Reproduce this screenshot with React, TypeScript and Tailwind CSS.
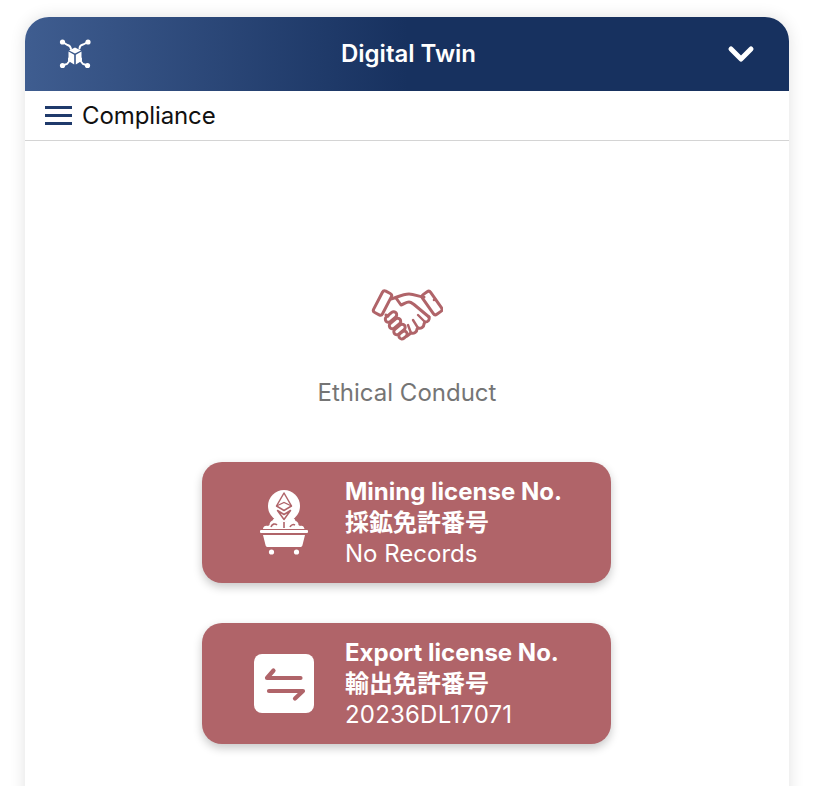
import type { ReactNode } from "react";
import { ChevronDown } from "lucide-react";

function TwinLogo() {
  return (
    <svg width="32" height="32" viewBox="0 0 32 32" fill="none" stroke="white" strokeWidth="1.9" strokeLinecap="round">
      <circle cx="3.500" cy="4" r="2.600" fill="white" stroke="none" />
      <circle cx="29" cy="4" r="2.600" fill="white" stroke="none" />
      <circle cx="3.500" cy="27.500" r="2.600" fill="white" stroke="none" />
      <circle cx="28.500" cy="27.500" r="2.600" fill="white" stroke="none" />
      <path d="M3.500 4l5 3c2 .5 3 1.500 3.500 4" />
      <path d="M29 4l-5 2.500c-2 .5-3.500 1.500-3.500 4" />
      <path d="M3.500 27.500l4.500-1.500 2-2.500v-3" />
      <path d="M28.500 27.500l-4.500-1.500-2-2.500v-3" />
      <path d="M16 9.500l6 3-6 3-6-3z" fill="white" stroke="none" />
      <path d="M9.500 13.500l5.700 3.200v9.800l-5.700-3.500zM22.500 13.500l-5.700 3.200v9.800l5.700-3.500z" fill="white" stroke="none" />
    </svg>
  );
}

function Handshake() {
  return (
    <svg width="72" height="52" viewBox="0 0 72 52" fill="none" stroke="#b06469" strokeWidth="3" strokeLinejoin="round" strokeLinecap="round">
      <rect x="-5" y="-12" width="10" height="24" rx="2.500" transform="translate(11.500 14) rotate(27.500)" />
      <rect x="-5" y="-12" width="10" height="24" rx="2.500" transform="translate(61 14) rotate(-35)" />
      <circle cx="63" cy="11" r="0.600" strokeWidth="1.400" />
      <path d="M20 10c5-1 11-5 18-5 6 0 10 3 15 3" />
      <path d="M25 9l5 7c3-1 5-3 8-3 2 0 3 1 5 2.500L58 28" />
      <path d="M58 28c1 3-1 5-4 5l-1 2c0 3-3 5-6 4l-1 1c0 3-3 5-6 4l-4 3" />
      <path d="M47 26l7 7M42 31l5 8M37 36l3 8" strokeWidth="2.400" />
      <path d="M15 26l2 1" />
      <rect x="-6.500" y="-3" width="13" height="6" rx="3" transform="translate(20 28) rotate(-40)" />
      <rect x="-6.500" y="-3" width="13" height="6" rx="3" transform="translate(24 34.500) rotate(-40)" />
      <rect x="-6.500" y="-3" width="13" height="6" rx="3" transform="translate(28.500 40.500) rotate(-40)" />
      <rect x="-4.500" y="-3" width="9" height="6" rx="3" transform="translate(32 46) rotate(-40)" />
    </svg>
  );
}

function MiningCart() {
  return (
    <svg width="48" height="67" viewBox="0 0 48 67">
      <circle cx="24" cy="17" r="16" fill="white" />
      <path d="M24 4l7.500 13-7.500 4.500-7.500-4.500z" fill="none" stroke="#b06469" strokeWidth="1.500" strokeLinejoin="round" />
      <path d="M16.500 17l7.500-3.500 7.500 3.500" fill="none" stroke="#b06469" strokeWidth="1.200" />
      <path d="M17.500 21.500l6.500 4 6.500-4-6.500 9z" fill="none" stroke="#b06469" strokeWidth="1.500" strokeLinejoin="round" />
      <path d="M3 40c0-3 3-4 5-3l1.500-1c0-2 1-4 3-4.500 1-2 2.500-3 4-3 2 3 4 4 7.500 4s6-1 7.500-4c2 0 3.500 1.500 4 3.500 2 .5 3 2 3 4l1.500 1c2-1 4 0 4.500 3z" fill="white" />
      <path d="M11 38c1-3 4-4 6-2M24 33v6M30 38c1-2 3-3 5-2" stroke="#b06469" strokeWidth="1.600" fill="none" />
      <rect x="0" y="41" width="48" height="3" rx="1" fill="white" />
      <path d="M3 46h42l-2.500 10c-.3 1.500-1 2-2.500 2H8c-1.500 0-2.200-.5-2.500-2z" fill="white" />
      <circle cx="11.500" cy="63" r="2.600" fill="white" />
      <circle cx="36.500" cy="63" r="2.600" fill="white" />
    </svg>
  );
}

function ExchangeIcon() {
  return (
    <div className="flex h-[59px] w-[60px] items-center justify-center rounded-[8px] bg-white">
      <svg width="44" height="44" viewBox="0 0 44 44" fill="none" stroke="#b06469" strokeWidth="4.200" strokeLinecap="round" strokeLinejoin="round">
        <path d="M38.500 16H5l6.500-7.500" />
        <path d="M7 29h34l-8 7.500" />
      </svg>
    </div>
  );
}

function LicenseCard({ icon, title, jp, value, valueClass }: { icon: ReactNode; title: string; jp: string; value: string; valueClass?: string }) {
  return (
    <div className="flex h-[121px] w-[409px] items-center rounded-[20px] bg-[#b06469] text-white shadow-[0_4px_10px_rgba(0,0,0,0.22)]">
      <div className="flex w-[143px] shrink-0 justify-center pl-[21px]">{icon}</div>
      <div className="text-[24px] leading-[31px]">
        <p className="font-bold">{title}</p>
        <p className="font-bold">{jp}</p>
        <p className={valueClass}>{value}</p>
      </div>
    </div>
  );
}

export default function App() {
  return (
    <div className="h-[786px] overflow-hidden bg-white pl-[25px] pr-[26px] pt-[17px] font-['Inter','Noto_Sans_CJK_JP',sans-serif]">
      <div className="h-[800px] rounded-t-[24px] bg-white shadow-[0_0_16px_rgba(0,0,0,0.12)]">
        <header className="flex h-[74px] items-center justify-between rounded-t-[24px] bg-gradient-to-r from-[#3f5d90] via-[#17315f] via-50% to-[#17315f] pl-[34px] pr-[28px]">
          <TwinLogo />
          <h1 className="pl-[5px] text-[24px] font-semibold text-white">Digital Twin</h1>
          <ChevronDown size={40} strokeWidth={3} className="text-white" />
        </header>
        <div className="flex h-[50px] items-center gap-[10px] border-b border-[#d4d4d4] pl-[20px]">
          <div className="flex w-[27px] flex-col gap-[5px]">
            <span className="h-[3px] bg-[#1f3a6b]" />
            <span className="h-[3px] bg-[#1f3a6b]" />
            <span className="h-[3px] bg-[#1f3a6b]" />
          </div>
          <span className="text-[24px] tracking-[-0.1px] text-[#111]">Compliance</span>
        </div>
        <main className="flex flex-col items-center pt-[148px]">
          <Handshake />
          <p className="mt-[36px] text-[24px] leading-[32px] text-[#757575]">Ethical Conduct</p>
          <div className="mr-[1px] mt-[53px] flex flex-col gap-[40px]">
            <LicenseCard icon={<MiningCart />} title="Mining license No." jp="採鉱免許番号" value="No Records" />
            <LicenseCard icon={<ExchangeIcon />} title="Export license No." jp="輸出免許番号" value="20236DL17071" valueClass="tracking-[0.2px]" />
          </div>
        </main>
      </div>
    </div>
  );
}
